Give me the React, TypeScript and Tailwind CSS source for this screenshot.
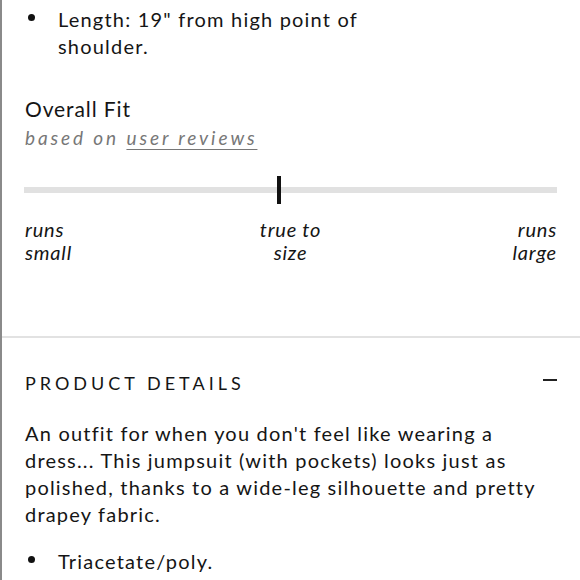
import React from "react";

const font = { fontFamily: "Lato, 'Noto Sans', sans-serif" };

function Bullet({ children }: { children: React.ReactNode }) {
  return (
    <div className="flex items-start">
      <div className="w-[34px] shrink-0 pt-[8px] pl-[4px]">
        <span className="block w-[7px] h-[7px] rounded-full bg-[#111]" />
      </div>
      <div>{children}</div>
    </div>
  );
}

export default function App() {
  return (
    <div
      className="w-[580px] h-[580px] overflow-hidden bg-white border-l-2 border-[#8a8a8a] text-[#151515]"
      style={font}
    >
      <div className="pl-[22px] pr-[23px] pt-[6px] pb-[72px]">
        <div className="text-[20px] leading-[27px] tracking-[1.2px]">
          <Bullet>
            Length: 19&quot; from high point of
            <br />
            shoulder.
          </Bullet>
        </div>

        <div className="mt-[35px] text-[21px] leading-[27px] tracking-[0.9px] pl-[1px]">Overall Fit</div>
        <div className="mt-[4px] text-[19px] leading-[24px] italic tracking-[2.9px] text-[#777] pl-[1px]">
          based on{" "}
          <span className="underline decoration-[1px] underline-offset-[4px]">user reviews</span>
        </div>

        <div className="relative mt-[37px] h-[6px] bg-[#e1e1e1]">
          <div className="absolute left-[253px] top-[-11px] w-[4px] h-[28px] bg-[#111]" />
        </div>

        <div className="mt-[25px] grid grid-cols-3 text-[20px] leading-[23px] italic tracking-[0.8px]">
          <div className="text-left pl-[1px]">
            runs
            <br />
            small
          </div>
          <div className="text-center">
            true to
            <br />
            size
          </div>
          <div className="text-right">
            runs
            <br />
            large
          </div>
        </div>
      </div>

      <div className="border-t-2 border-[#e2e2e2] pl-[22px] pr-[23px] pt-[33px]">
        <div className="flex items-center justify-between">
          <div className="text-[18px] leading-[24px] tracking-[4px] pl-[1px]">PRODUCT DETAILS</div>
          <span className="block w-[14px] h-[2.5px] bg-[#222] mb-[6px]" />
        </div>

        <p className="mt-[25px] text-[20px] leading-[27px] tracking-[1.2px] pl-[1px]">
          An outfit for when you don't feel like wearing a
          <br />
          dress... This jumpsuit (with pockets) looks just as
          <br />
          polished, thanks to a wide-leg silhouette and pretty
          <br />
          drapey fabric.
        </p>

        <div className="mt-[20px] text-[20px] leading-[27px] tracking-[1.2px]">
          <Bullet>Triacetate/poly.</Bullet>
        </div>
      </div>
    </div>
  );
}
